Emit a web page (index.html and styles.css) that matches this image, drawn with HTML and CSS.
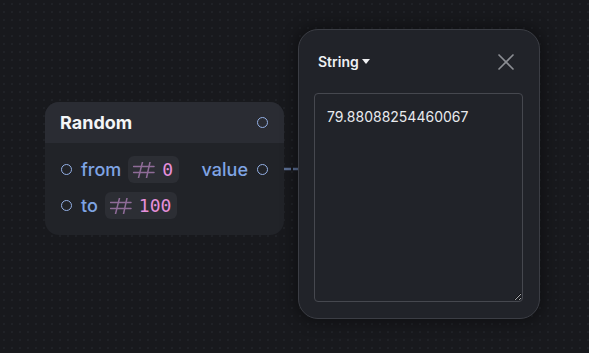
FILE: index.html
```html
<!DOCTYPE html>
<html>
<head>
<meta charset="utf-8">
<link rel="stylesheet" href="styles.css">
</head>
<body>
<div class="canvas">
  <svg class="edges" width="589" height="353">
    <line x1="284" y1="169" x2="298" y2="169" stroke="#5a6d92" stroke-width="2.5" stroke-dasharray="7 2"/>
  </svg>
  <div class="node">
    <div class="node-header">
      <span class="node-title">Random</span>
      <span class="port"></span>
    </div>
    <div class="node-body">
      <div class="row">
        <span class="port"></span>
        <span class="label">from</span>
        <span class="chip">
          <svg class="hash" viewBox="0 0 22 16" width="22" height="16"><line x1="0.5" y1="4.5" x2="21" y2="4.5"/><line x1="0.5" y1="10.5" x2="21" y2="10.5"/><line x1="9.5" y1="0" x2="5.5" y2="16"/><line x1="17" y1="0" x2="13.5" y2="16"/></svg>
          <span class="num">0</span>
        </span>
        <span class="spacer"></span>
        <span class="label out">value</span>
        <span class="port"></span>
      </div>
      <div class="row">
        <span class="port"></span>
        <span class="label">to</span>
        <span class="chip">
          <svg class="hash" viewBox="0 0 22 16" width="22" height="16"><line x1="0.5" y1="4.5" x2="21" y2="4.5"/><line x1="0.5" y1="10.5" x2="21" y2="10.5"/><line x1="9.5" y1="0" x2="5.5" y2="16"/><line x1="17" y1="0" x2="13.5" y2="16"/></svg>
          <span class="num">100</span>
        </span>
      </div>
    </div>
  </div>
  <div class="popup">
    <div class="popup-head">
      <span class="type">String<span class="caret"></span></span>
      <svg class="close" viewBox="0 0 18 18" width="18" height="18"><line x1="1.5" y1="1.5" x2="16.5" y2="16.5"/><line x1="16.5" y1="1.5" x2="1.5" y2="16.5"/></svg>
    </div>
    <textarea class="value-box">79.88088254460067</textarea>
  </div>
</div>
</body>
</html>
```
FILE: styles.css
```css
html, body {
  margin: 0;
  padding: 0;
}
body {
  width: 589px;
  height: 353px;
  overflow: hidden;
  background-color: #18191d;
  background-image: radial-gradient(circle, #1f2126 0.7px, transparent 1px);
  background-size: 8px 8px;
  font-family: Inter, "Noto Sans", sans-serif;
}
.canvas {
  position: relative;
  width: 589px;
  height: 353px;
}
.edges {
  position: absolute;
  left: 0;
  top: 0;
}
.node {
  position: absolute;
  left: 45px;
  top: 102px;
  width: 239px;
  height: 133px;
  border-radius: 14px;
  background: #212328;
  overflow: hidden;
}
.node-header {
  height: 41px;
  background: #2a2c33;
  display: flex;
  align-items: center;
  padding: 0 16px 0 15px;
}
.node-title {
  flex: 1;
  color: #f4f5f7;
  font-weight: 700;
  font-size: 18px;
}
.port {
  width: 9px;
  height: 9px;
  border: 1.5px solid #94b0e6;
  border-radius: 50%;
  box-sizing: content-box;
  flex: none;
}
.node-body {
  padding: 13px 16px 0 16px;
  display: flex;
  flex-direction: column;
  gap: 9px;
}
.row {
  display: flex;
  align-items: center;
  height: 27px;
}
.row .port {
  margin-right: 9px;
}
.row .port:last-child {
  margin-right: 0;
  margin-left: 9px;
}
.label {
  color: #7fa4e4;
  font-size: 18px;
  font-weight: 500;
  margin-right: 7px;
}
.label.out {
  margin-right: 0;
}
.chip {
  display: flex;
  align-items: center;
  height: 27px;
  padding: 0 6px 0 5px;
  background: #2c2e34;
  border-radius: 6px;
  gap: 7px;
}
.hash {
  fill: none;
  stroke: #8f6c98;
  stroke-width: 1.5;
  stroke-linecap: round;
}
.num {
  font-family: "DejaVu Sans Mono", monospace;
  font-size: 18px;
  color: #e690db;
}
.spacer {
  flex: 1;
}
.popup {
  position: absolute;
  left: 298px;
  top: 29px;
  width: 242px;
  height: 290px;
  box-sizing: border-box;
  border: 1px solid #3b3d44;
  border-radius: 20px;
  background: #212329;
  box-shadow: 0 0 14px 4px rgba(0,0,0,0.35);
  padding: 0 16px 16px 15px;
  display: flex;
  flex-direction: column;
}
.popup-head {
  height: 63px;
  display: flex;
  align-items: center;
  justify-content: space-between;
  padding: 0 8px 0 4px;
}
.type {
  color: #eef0f3;
  font-size: 14px;
  font-weight: 600;
  display: flex;
  align-items: center;
}
.caret {
  width: 0;
  height: 0;
  margin-left: 3px;
  border-left: 4px solid transparent;
  border-right: 4px solid transparent;
  border-top: 5px solid #f0f0f2;
}
.close {
  stroke: #8b8d93;
  stroke-width: 1.6;
  fill: none;
}
.value-box {
  flex: 1;
  box-sizing: border-box;
  width: 209px;
  margin: 0;
  background: #212329;
  border: 1px solid #46484f;
  border-radius: 4px;
  color: #e8eaee;
  font-family: Inter, "Noto Sans", sans-serif;
  font-size: 14px;
  padding: 14px 12px;
  resize: both;
  outline: none;
  color-scheme: dark;
}
```
